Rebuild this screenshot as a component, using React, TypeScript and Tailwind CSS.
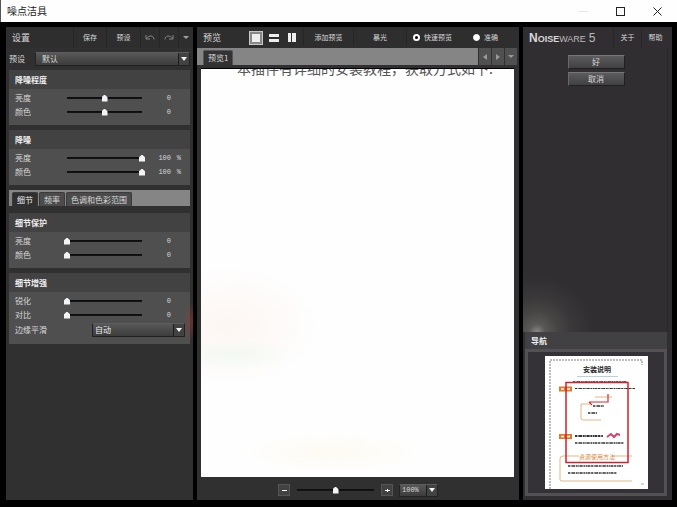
import React, { useState } from 'react'
import clsx from 'clsx'

type Level = { label: string; value: number; min?: number; unit?: string }

const STRENGTH: Level[] = [
  { label: '亮度', value: 0, min: -100 },
  { label: '颜色', value: 0, min: -100 },
]
const REDUCTION: Level[] = [
  { label: '亮度', value: 100, unit: '%' },
  { label: '颜色', value: 100, unit: '%' },
]
const PROTECTION: Level[] = [
  { label: '亮度', value: 0 },
  { label: '颜色', value: 0 },
]
const ENHANCEMENT: Level[] = [
  { label: '锐化', value: 0 },
  { label: '对比', value: 0 },
]

const sliderClass =
  'h-3 appearance-none bg-[linear-gradient(#0b0b0b,#161616)] bg-center bg-no-repeat outline-none ' +
  '[&::-webkit-slider-thumb]:h-[7px] [&::-webkit-slider-thumb]:w-[6px] [&::-webkit-slider-thumb]:appearance-none ' +
  '[&::-webkit-slider-thumb]:bg-gray-100 [&::-webkit-slider-thumb]:[clip-path:polygon(50%_0,100%_40%,100%_100%,0_100%,0_40%)]'

function Caret({ className }: { className?: string }) {
  return (
    <svg viewBox="0 0 8 4" preserveAspectRatio="none" className={className} fill="currentColor" aria-hidden>
      <path d="M0 0h8L4 4z" />
    </svg>
  )
}

function LevelRow({ level, group }: { level: Level; group: string }) {
  const [value, setValue] = useState(level.value)
  const id = `${group}-${level.label}`
  return (
    <div className="flex h-[14px] items-center">
      <label htmlFor={id} className="w-[49px]">{level.label}</label>
      <input
        id={id}
        type="range"
        min={level.min ?? 0}
        max={100}
        value={value}
        onChange={(e) => setValue(Number(e.target.value))}
        className={clsx(sliderClass, 'w-[81px] bg-[length:75px_2px]')}
      />
      <output htmlFor={id} className="w-[26px] text-right font-['Liberation_Mono',monospace] text-[7px]">{value}</output>
      <span className="w-[10px] text-right font-['Liberation_Mono',monospace] text-[7px]">{level.unit}</span>
    </div>
  )
}

function Group({ title, levels, children }: { title: string; levels: Level[]; children?: React.ReactNode }) {
  return (
    <section className="bg-[#4f4f4f] text-[8px] text-[#d8d8d8]">
      <h2 className="flex h-[19px] items-center bg-[#424242] px-[6px] font-bold text-[#eeeeee]">{title}</h2>
      <div className="pt-[2px] pr-[5px] pb-[6px] pl-[6px]">
        {levels.map((l) => <LevelRow key={l.label} level={l} group={title} />)}
        {children}
      </div>
    </section>
  )
}

function Dropdown({ label, options, className }: { label: string; options: string[]; className?: string }) {
  return (
    <span className={clsx('relative flex border border-[#222] border-t-[#5c5c5c] bg-linear-to-b from-[#585858] to-[#3c3c3c]', className)}>
      <select aria-label={label} className="w-full appearance-none bg-transparent px-[6px] text-inherit outline-none">
        {options.map((o) => <option key={o}>{o}</option>)}
      </select>
      <span className="pointer-events-none absolute inset-y-0 right-0 flex w-[11px] items-center justify-center border-l border-[#1c1c1c] bg-[#424242]">
        <Caret className="h-[4px] w-[6px] text-gray-100" />
      </span>
    </span>
  )
}

function SettingsPanel() {
  const [tab, setTab] = useState('细节')
  return (
    <aside className="relative flex w-[187px] shrink-0 flex-col bg-[#303030] text-[#d8d8d8]">
      <header className="flex h-[21px] items-center bg-[#2e2e2e]">
        <h1 className="w-[67px] pl-[6px] text-[9px]">设置</h1>
        <button className="h-full w-[33px] border-l border-[#262626] text-[7px]">保存</button>
        <button className="h-full w-[34px] border-l border-[#262626] text-[7px]">预设</button>
        <button aria-label="撤销" className="flex h-full w-[19px] items-center justify-center border-l border-[#262626] text-[#858585]">
          <svg viewBox="0 0 10 7" className="h-[7px] w-[10px]" fill="none" stroke="currentColor">
            <path d="M1 1v4h4M1.5 4.5C4 .8 9 1.3 9 5.5" />
          </svg>
        </button>
        <button aria-label="重做" className="flex h-full w-[19px] items-center justify-center border-l border-[#262626] text-[#858585]">
          <svg viewBox="0 0 10 7" className="h-[7px] w-[10px]" fill="none" stroke="currentColor">
            <path d="M9 1v4H5M8.5 4.5C6 .8 1 1.3 1 5.5" />
          </svg>
        </button>
        <button aria-label="历史" className="flex h-full w-[14px] items-center justify-center border-l border-[#262626] text-[#a0a0a0]">
          <Caret className="h-[3px] w-[6px]" />
        </button>
      </header>

      <div className="flex h-[22px] items-center px-[3px] text-[8px]">
        <span className="w-[26px]">预设</span>
        <Dropdown label="预设" options={['默认']} className="h-[14px] flex-1" />
      </div>

      <div className="flex flex-col gap-[5px] px-[3px]">
        <Group title="降噪程度" levels={STRENGTH} />
        <Group title="降噪" levels={REDUCTION} />
      </div>

      <div className="mx-[3px] mt-[5px] mb-[7px] flex h-[16px] items-end gap-px bg-[#858585] pl-[3px] text-[8px]">
        {['细节', '频率', '色调和色彩范围'].map((t) => (
          <button
            key={t}
            onClick={() => setTab(t)}
            className={clsx(
              'h-[14px] rounded-t-xs border border-b-0 border-[#3a3a3a] px-[4px]',
              t === tab ? 'bg-[#303030] text-[#eeeeee]' : 'bg-[#4b4b4b]'
            )}
          >
            {t}
          </button>
        ))}
      </div>

      <div className="flex flex-col gap-[5px] px-[3px]">
        <Group title="细节保护" levels={PROTECTION} />
        <Group title="细节增强" levels={ENHANCEMENT}>
          <div className="flex h-[16px] items-center justify-between">
            <span>边缘平滑</span>
            <Dropdown label="边缘平滑" options={['自动']} className="h-[14px] w-[93px] text-[#eeeeee] [&>select]:px-[2px]" />
          </div>
        </Group>
      </div>
      <div className="pointer-events-none absolute top-[275px] right-0 h-[40px] w-[10px] bg-[radial-gradient(ellipse_at_100%_50%,#a03a3080,transparent_70%)]" />
    </aside>
  )
}

function PreviewPanel() {
  const [zoom, setZoom] = useState(50)
  const [mode, setMode] = useState('快速预览')
  const [layout, setLayout] = useState(0)
  return (
    <main className="flex min-w-0 flex-1 flex-col bg-[#303030] text-[#d8d8d8]">
      <header className="flex h-[21px] items-center bg-[#2e2e2e]">
        <h1 className="w-[52px] pl-[6px] text-[9px]">预览</h1>
        {[
          <rect key="a" x="1" y="1" width="8" height="8" />,
          <path key="b" d="M0 1h10v3H0zM0 6h10v3H0z" />,
          <path key="c" d="M1 0h3v9H1zM5 0h4v9H5z" />,
        ].map((shape, i) => (
          <button
            key={i}
            aria-label={`布局 ${i + 1}`}
            onClick={() => setLayout(i)}
            className={clsx('mr-[4px] flex size-[14px] items-center justify-center', i === layout && 'border border-[#c8c8c8] bg-[#888]')}
          >
            <svg viewBox="0 0 10 10" className="size-[10px] shrink-0" fill="#eeeeee">{shape}</svg>
          </button>
        ))}
        <button className="h-[17px] w-[50px] border-l border-[#262626] text-[7px]">添加预览</button>
        <button className="h-[17px] w-[54px] border-x border-[#262626] text-[7px]">暴光</button>
        <div className="flex flex-1 items-center gap-[21px] pl-[6px]">
          {['快速预览', '准确'].map((m) => (
            <label key={m} className="flex items-center gap-[4px] text-[7px] whitespace-nowrap">
              <input
                type="radio"
                name="mode"
                checked={m === mode}
                onChange={() => setMode(m)}
                className="size-[7px] appearance-none rounded-full border border-white bg-white checked:border-2 checked:bg-black"
              />
              {m}
            </label>
          ))}
        </div>
      </header>

      <div className="flex h-[17px] gap-px pr-[2px]">
        <div className="flex flex-1 items-end bg-[#858585] pl-[6px]">
          <button className="h-[15px] rounded-t-xs border border-b-0 border-[#555] bg-[#333] px-[4px] text-[8px]">预览1</button>
        </div>
        <button aria-label="上一个" className="flex w-[12px] items-center justify-center bg-[#505050] text-[#999]"><Caret className="h-[4px] w-[6px] rotate-90" /></button>
        <button aria-label="下一个" className="flex w-[12px] items-center justify-center bg-[#505050] text-[#999]"><Caret className="h-[4px] w-[6px] -rotate-90" /></button>
        <button aria-label="列表" className="flex w-[12px] items-center justify-center bg-[#505050] text-[#999]"><Caret className="h-[3px] w-[6px]" /></button>
      </div>

      <div className="mr-[5px] ml-[4px] mt-[3px] flex-1 overflow-hidden border-t border-black bg-[#fefefe] bg-[radial-gradient(ellipse_90px_60px_at_9%_63%,#fbeee880,transparent),radial-gradient(ellipse_60px_16px_at_10%_70%,#e8faf0a0,transparent),radial-gradient(ellipse_90px_20px_at_42%_94%,#fcf8e890,transparent)]">
        <p className="-mt-[10px] pl-[36px] text-[14px] leading-[18px] whitespace-nowrap text-[#555]">本插件有详细的安装教程，获取方式如下:</p>
      </div>

      <footer className="flex h-[23px] items-center justify-center pt-[3px]">
        <button aria-label="缩小" className="flex size-[12px] items-center justify-center border border-[#555] bg-[#424242]"><span className="h-px w-[5px] bg-white" /></button>
        <input
          type="range"
          aria-label="缩放"
          value={zoom}
          onChange={(e) => setZoom(Number(e.target.value))}
          className={clsx(sliderClass, 'mx-[4px] w-[83px] bg-[length:77px_2px]')}
        />
        <button aria-label="放大" className="flex size-[12px] items-center justify-center border border-[#555] bg-[#424242]">
          <svg viewBox="0 0 5 5" className="size-[5px]" stroke="#fff"><path d="M0 2.5h5M2.5 1v3" /></svg>
        </button>
        <Dropdown label="缩放比例" options={['100%']} className="ml-[6px] h-[13px] w-[39px] font-['Liberation_Mono',monospace] text-[7px] [&>select]:px-[2px]" />
      </footer>
    </main>
  )
}

function Thumbnail() {
  return (
    <svg viewBox="0 0 103 133" className="h-[133px] w-[103px] bg-white font-['Noto_Sans_CJK_SC',sans-serif]">
      <path d="M5 133V4h92v5" fill="none" stroke="#444" strokeDasharray="2 1" strokeWidth=".7" />
      <text x="52" y="16" fontSize="7" fontWeight="700" textAnchor="middle" fill="#26262c">安装说明</text>
      <path d="M32 20.500h41" stroke="#9bbbd5" strokeWidth=".7" />
      <g stroke="#333" strokeDasharray="2 .6 1 .4 3 .7" fill="none">
        <path d="M28 25.500h54" strokeWidth=".8" />
        <path d="M30 32.500h60" strokeWidth="1.2" />
        <path d="M48 50h11M43 57h9" strokeWidth="1.3" />
        <path d="M30 80h28" strokeWidth="2" />
        <path d="M30 87h49" strokeWidth="1.5" />
        <path d="M23 110h55M23 117h49" strokeWidth="1.5" />
      </g>
      <path d="M14 30.500h13v5H14zM14 78h13v5H14z" fill="#e57824" />
      <path d="M16 33h3m3 0h3M16 80.500h3m3 0h3" stroke="#fff" strokeWidth="1.5" />
      <g fill="none" stroke="#dfa565" strokeWidth=".8">
        <path d="M45 48h-9v14q0 2 2 2h18M50 41h17" />
        <path d="M34 100H18q-3 0-3 3v21q0 1 2 1h70M69 100h18" />
      </g>
      <path d="M44 46h19v-8M44 46l3 3" fill="none" stroke="#d82c31" strokeWidth="1.2" />
      <path d="M62 81l4-3 3 3 3-3 3 1" fill="none" stroke="#d84268" strokeWidth="2" />
      <text x="52" y="103" fontSize="6" textAnchor="middle" fill="#d98439">资源使用方法</text>
      <path d="M96 128h3" stroke="#aaa" />
      <rect x="21" y="26.5" width="62" height="80" fill="none" stroke="#d2202d" strokeWidth="1.5" />
    </svg>
  )
}

function NavigatorPanel() {
  return (
    <aside className="flex w-[149px] shrink-0 flex-col bg-[#302e31] text-[#d8d8d8]">
      <header className="flex h-[21px] items-center pl-[6px]">
        <h1 className="flex flex-1 items-baseline font-['Liberation_Sans',sans-serif] text-[9px] whitespace-nowrap">
          <b className="text-[12px]">N</b>
          <b>OISE</b>
          <span className="text-[#bbb]">WARE</span>
          <span className="pl-[3px] text-[12px] text-[#bbb]">5</span>
        </h1>
        <button className="h-full w-[28px] border-l border-[#29272a] text-[7px]">关于</button>
        <button className="mr-[3px] h-full w-[28px] border-l border-[#29272a] text-[7px]">帮助</button>
      </header>
      <div className="mr-[4px] flex flex-1 flex-col items-center gap-[3px] border-r border-[#29272a] bg-[radial-gradient(circle_at_14px_100%,#8a8887,#5a5857_8px,#484645_20px,#3a3839_34px,transparent_56px)] pt-[7px] pl-[2px]">
        {['好', '取消'].map((t) => (
          <button key={t} className="flex h-[14px] w-[57px] items-center justify-center border border-[#202020] border-t-[#777] border-l-[#686868] bg-linear-to-b from-[#5c5b5d] to-[#414042] text-[8px]">
            {t}
          </button>
        ))}
      </div>
      <section className="mr-[5px] mb-[4px] ml-[2px]">
        <h2 className="flex h-[17px] items-center bg-[#414042] pl-[6px] text-[8px] font-bold text-[#eeeeee]">导航</h2>
        <div className="flex h-[147px] items-center justify-center border-3 border-[#535154] bg-[#343236]">
          <Thumbnail />
        </div>
      </section>
    </aside>
  )
}

export default function App() {
  return (
    <div className="flex h-screen flex-col bg-black font-['Noto_Sans_CJK_SC',sans-serif] leading-none select-none">
      <div className="flex h-[22px] shrink-0 items-center justify-between border-l border-[#555] bg-[#fefefe] pl-[6px] text-[#222]">
        <span className="text-[10px]">噪点洁具</span>
        <div className="flex gap-[28px] pr-[15px]">
          <button aria-label="最小化" className="flex w-[10px] items-center"><span className="h-px w-full bg-gray-200" /></button>
          <button aria-label="最大化" className="size-[9px] border border-[#222]" />
          <button aria-label="关闭">
            <svg viewBox="0 0 9 9" className="size-[9px]" stroke="currentColor"><path d="M.5.5l8 8M8.5.5l-8 8" /></svg>
          </button>
        </div>
      </div>
      <div className="flex min-h-0 flex-1 gap-[4px] pt-[5px] pr-[5px] pb-[7px] pl-[6px]">
        <SettingsPanel />
        <PreviewPanel />
        <NavigatorPanel />
      </div>
    </div>
  )
}
